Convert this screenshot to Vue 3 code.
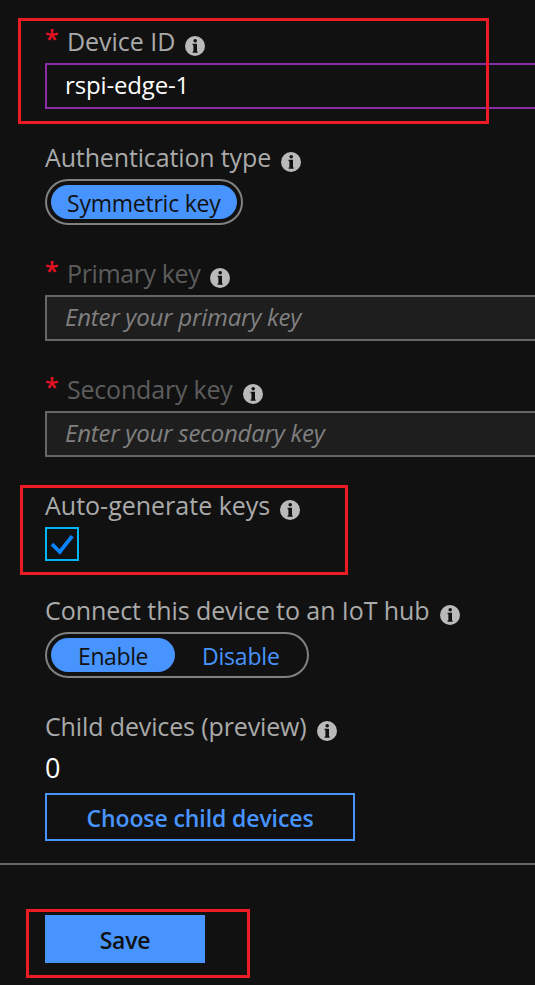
<script setup>
import { h } from 'vue'

const InfoIcon = () =>
  h('svg', { class: 'info', viewBox: '0 0 20 20', width: 20, height: 20 }, [
    h('circle', { cx: 10, cy: 10, r: 10, fill: '#bababa' }),
    h('circle', { cx: 10.2, cy: 4.7, r: 1.8, fill: '#111' }),
    h('path', { d: 'M7.6 7.8H12V15.4H12.7V16.8H7.6V15.4H8.4V9.2H7.6Z', fill: '#111' }),
  ])
</script>

<template>
  <main class="panel">
    <form class="form" @submit.prevent>
      <section class="field">
        <label class="label"><b class="star">*</b><span class="t-device">Device ID</span><InfoIcon /></label>
        <div class="input active"><span class="t-value">rspi-edge-1</span></div>
      </section>

      <section class="field">
        <label class="label"><span class="t-auth">Authentication type</span><InfoIcon /></label>
        <div class="pills single"><span class="pill on"><span class="t-sym">Symmetric key</span></span></div>
      </section>

      <section class="field">
        <label class="label dim"><b class="star">*</b><span class="t-primary">Primary key</span><InfoIcon /></label>
        <div class="input off"><span class="t-ph">Enter your primary key</span></div>
      </section>

      <section class="field">
        <label class="label dim"><b class="star">*</b><span class="t-secondary">Secondary key</span><InfoIcon /></label>
        <div class="input off"><span class="t-ph">Enter your secondary key</span></div>
      </section>

      <section class="field auto">
        <label class="label"><span>Auto-generate keys</span><InfoIcon /></label>
        <div class="check">
          <svg viewBox="0 0 30 30" width="30" height="30"><path d="M5 15.2L12.8 23L25.2 7.2" fill="none" stroke="#0a84ff" stroke-width="3.8" /></svg>
        </div>
      </section>

      <section class="field">
        <label class="label"><span class="t-connect">Connect this device to an IoT hub</span><InfoIcon /></label>
        <div class="pills double">
          <span class="pill on"><span class="t-enable">Enable</span></span>
          <span class="pill"><span class="t-disable">Disable</span></span>
        </div>
      </section>

      <section class="field">
        <label class="label"><span class="t-child">Child devices (preview)</span><InfoIcon /></label>
        <div class="count">0</div>
        <button class="choose"><span class="t-choose">Choose child devices</span></button>
      </section>
    </form>

    <footer class="footer">
      <button class="save"><span class="t-save">Save</span></button>
    </footer>

    <div class="mark mark-device"></div>
    <div class="mark mark-auto"></div>
    <div class="mark mark-save"></div>
  </main>
</template>

<style>
body { background: #111; overflow: hidden; }
</style>

<style scoped>
.panel {
  position: relative;
  box-sizing: border-box;
  width: 535px;
  height: 985px;
  overflow: hidden;
  background: #111;
  color: #aaa;
  font-family: "Open Sans", "Noto Sans", sans-serif;
  font-size: 24px;
  white-space: nowrap;
}
.panel * { box-sizing: border-box; }
.form {
  display: flex;
  flex-direction: column;
  gap: 32px;
  height: 863px;
  padding: 25px 0 0 45px;
}
.label {
  display: flex;
  align-items: flex-start;
  height: 38px;
  font-size: 25px;
  line-height: 33px;
}
.dim { color: #5c5c5c; }
.star {
  width: 22px;
  color: #e81123;
  font-size: 25px;
  font-weight: 600;
  line-height: 27px;
}
.info { flex: none; margin: 10.7px 0 0 10px; }
.input {
  display: flex;
  width: 520px;
  height: 46px;
  padding-left: 18px;
  border: 2px solid #666;
  line-height: 40px;
}
.active { border-color: #8a2da5; color: #fff; }
.off { background: #1e1e1e; color: #808080; font-style: italic; }
.pills {
  display: flex;
  height: 46px;
  padding: 4px;
  border: 2px solid #808080;
  border-radius: 23px;
  color: #4894fe;
  font-size: 23px;
  line-height: 37px;
}
.single { width: 198px; }
.double { width: 264px; }
.pill {
  display: flex;
  height: 34px;
  padding: 0 16px;
  border-radius: 17px;
}
.single .pill { width: 186px; }
.double .pill { width: 124px; padding-left: 27px; }
.on { background: #4894fe; color: #111; }
.auto { height: 73px; }
.check {
  width: 34px;
  height: 34px;
  border: 2px solid #00b7f4;
}
.check svg { display: block; }
.count {
  height: 45px;
  color: #fff;
  font-size: 27px;
  line-height: 40px;
}
button {
  display: flex;
  justify-content: center;
  height: 48px;
  padding: 0;
  border: 0;
  border-radius: 0;
  font: 600 23px/51px "Open Sans", "Noto Sans", sans-serif;
}
.choose {
  width: 310px;
  border: 2px solid #4894fe;
  background: none;
  color: #4894fe;
  line-height: 46px;
}
.footer {
  height: 122px;
  padding: 50px 0 0 45px;
  border-top: 2px solid #666;
}
.save { width: 160px; background: #4894fe; color: #111; }

.t-device { letter-spacing: -0.04px; }
.t-value { letter-spacing: -0.15px; }
.t-auth { letter-spacing: -0.14px; }
.t-sym { letter-spacing: -0.23px; }
.t-primary { letter-spacing: -0.38px; }
.t-secondary { letter-spacing: -0.2px; }
.t-ph { letter-spacing: -0.24px; }
.t-connect { letter-spacing: -0.07px; }
.t-enable { letter-spacing: -0.4px; }
.t-disable { letter-spacing: -0.2px; }
.t-child { letter-spacing: -0.13px; }
.t-choose { letter-spacing: -0.1px; }
.t-save { letter-spacing: -0.2px; }

.mark { position: absolute; border: 3px solid #ed1c24; pointer-events: none; }
.mark-device { left: 18px; top: 18px; width: 471px; height: 106px; }
.mark-auto { left: 20px; top: 485px; width: 328px; height: 90px; }
.mark-save { left: 26px; top: 909px; width: 224px; height: 69px; }
</style>
